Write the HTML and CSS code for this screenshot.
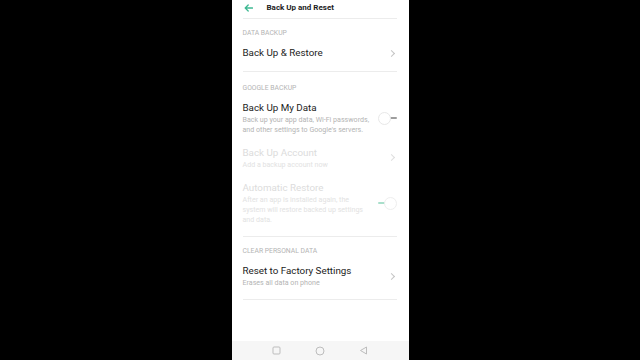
FILE: index.html
```html
<!DOCTYPE html>
<html lang="en">

<head>
    <meta charset="UTF-8">
    <meta name="viewport" content="width=device-width, initial-scale=1.0">
    <title>Back Up and Reset</title>
    <link rel="stylesheet" href="styles.css">
</head>

<body>
    <div class="phone">
        <div class="top-bar">
            <svg class="back-icon" width="9" height="8" viewBox="0 0 9 8">
                <path d="M8.5 4H1.2M4.2 1L1.2 4L4.2 7" fill="none" stroke="#3fb993" stroke-width="1.3" stroke-linecap="round" stroke-linejoin="round"/>
            </svg>
            <div class="page-title">Back Up and Reset</div>
        </div>

        <div class="settings">
            <div class="section">
                <div class="section-label">DATA BACKUP</div>
                <div class="row">
                    <div class="row-text">
                        <div class="row-title">Back Up &amp; Restore</div>
                    </div>
                    <span class="chevron"></span>
                </div>
            </div>

            <div class="section">
                <div class="section-label">GOOGLE BACKUP</div>
                <div class="row">
                    <div class="row-text">
                        <div class="row-title">Back Up My Data</div>
                        <div class="row-sub">Back up your app data, Wi-Fi passwords, and other settings to Google's servers.</div>
                    </div>
                    <span class="toggle"></span>
                </div>
                <div class="row disabled">
                    <div class="row-text">
                        <div class="row-title">Back Up Account</div>
                        <div class="row-sub">Add a backup account now</div>
                    </div>
                    <span class="chevron"></span>
                </div>
                <div class="row disabled">
                    <div class="row-text">
                        <div class="row-title">Automatic Restore</div>
                        <div class="row-sub">After an app is installed again, the system will restore backed up settings and data.</div>
                    </div>
                    <span class="toggle on"></span>
                </div>
            </div>

            <div class="section">
                <div class="section-label">CLEAR PERSONAL DATA</div>
                <div class="row">
                    <div class="row-text">
                        <div class="row-title">Reset to Factory Settings</div>
                        <div class="row-sub">Erases all data on phone</div>
                    </div>
                    <span class="chevron"></span>
                </div>
            </div>
        </div>

        <div class="nav-bar">
            <svg width="9" height="9" viewBox="0 0 9 9">
                <rect x="1" y="1" width="7" height="7" rx="1" fill="none" stroke="#bdbdbd" stroke-width="1"/>
            </svg>
            <svg width="10" height="10" viewBox="0 0 10 10">
                <circle cx="5" cy="5" r="4" fill="none" stroke="#bdbdbd" stroke-width="1"/>
            </svg>
            <svg width="9" height="9" viewBox="0 0 9 9">
                <path d="M7.5 1L1.5 4.5L7.5 8Z" fill="none" stroke="#bdbdbd" stroke-width="1" stroke-linejoin="round"/>
            </svg>
        </div>
    </div>
</body>

</html>
```

FILE: styles.css
```css
:root {
    --accent: #3fb993;
    --text: #1c1c1c;
    --muted: #b4b4b4;
    --faded: #dcdcdc;
    --line: #ececec;
}

* {
    margin: 0;
    padding: 0;
    box-sizing: border-box;
    font-family: Roboto, 'Noto Sans', sans-serif;
}

body {
    background: #000;
    width: 640px;
    height: 360px;
    display: flex;
    justify-content: center;
    overflow: hidden;
}

.phone {
    width: 177px;
    height: 360px;
    background: #fff;
    display: flex;
    flex-direction: column;
}

/* Header */
.top-bar {
    height: 19px;
    margin: 0 12px 0 11px;
    border-bottom: 1px solid var(--line);
    display: flex;
    align-items: center;
}

.back-icon {
    margin-left: 1px;
    margin-bottom: 3px;
}

.page-title {
    margin-left: 14px;
    margin-bottom: 3px;
    font-size: 8px;
    font-weight: 700;
    color: var(--text);
}

/* Settings list */
.settings {
    flex: 1;
    padding: 0 12px 0 11px;
}

.section {
    border-bottom: 1px solid var(--line);
    padding-bottom: 5px;
}

.section-label {
    font-size: 6.8px;
    line-height: 10px;
    color: var(--muted);
    padding: 10.5px 0 3px;
}

.section:first-child .section-label {
    padding-top: 9px;
}

.section:last-child .section-label {
    padding-top: 9.5px;
}

.row {
    display: flex;
    align-items: center;
    justify-content: space-between;
    padding: 5px 0 6px;
}

.row-text {
    width: 128px;
}

.row-title {
    font-size: 9.8px;
    color: var(--text);
    line-height: 14px;
}

.row-sub {
    font-size: 7.1px;
    color: var(--muted);
    line-height: 10px;
}

.disabled .row-title {
    color: var(--faded);
}

.disabled .row-sub {
    color: #e2e2e2;
}

.chevron {
    width: 5px;
    height: 5px;
    border-top: 1px solid #c4c4c4;
    border-right: 1px solid #c4c4c4;
    transform: rotate(45deg);
    margin-right: 3px;
}

.disabled .chevron {
    border-color: #dedede;
}

/* Toggle switch */
.toggle {
    position: relative;
    width: 19px;
    height: 11px;
}

.toggle::before {
    content: '';
    position: absolute;
    top: 4.5px;
    right: 0;
    width: 8px;
    height: 2px;
    border-radius: 1px;
    background: #9e9e9e;
}

.toggle::after {
    content: '';
    position: absolute;
    top: 0;
    left: 0;
    width: 11px;
    height: 11px;
    border-radius: 50%;
    border: 1px solid #e8e8e8;
    background: #fff;
}

.toggle.on::before {
    left: 0;
    right: auto;
    background: #a9dfcb;
}

.toggle.on::after {
    left: auto;
    right: 0;
    border-color: #eeeeee;
}

/* Nav bar */
.nav-bar {
    height: 19px;
    background: #f6f6f6;
    display: flex;
    align-items: center;
    justify-content: center;
    gap: 34px;
}
```
